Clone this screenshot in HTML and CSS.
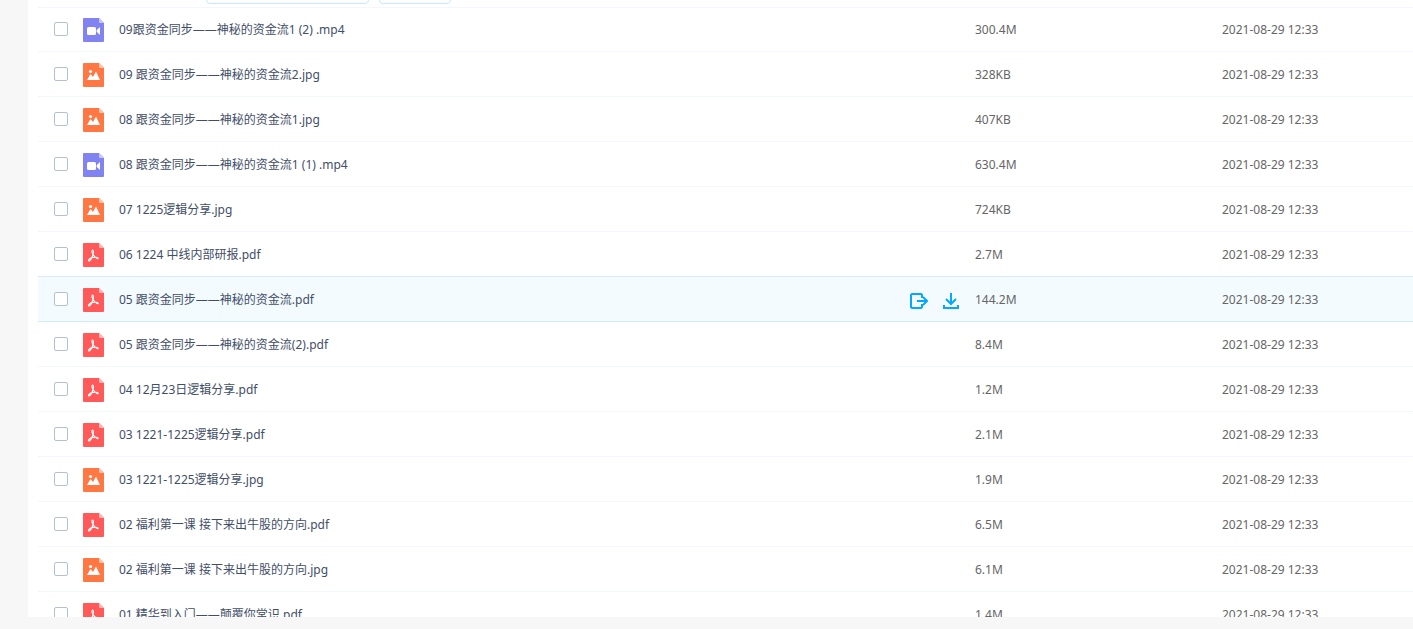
FILE: index.html
```
<!DOCTYPE html>
<html lang="zh-CN">

<head>
    <meta charset="UTF-8">
    <meta name="viewport" content="width=device-width, initial-scale=1.0">
    <title>文件列表</title>
    <link rel="stylesheet" href="styles.css">
</head>

<body>
    <!-- 图标 -->
    <svg class="sprite" aria-hidden="true">
        <symbol id="mp4" viewBox="0 0 21 24">
            <path fill="#8183f1" d="M1 0h15l5 5v18a1 1 0 0 1-1 1H1a1 1 0 0 1-1-1V1a1 1 0 0 1 1-1z" />
            <path fill="#c6c7fa" d="M16 0l5 5h-4a1 1 0 0 1-1-1z" />
            <rect fill="#fff" x="4" y="9" width="9" height="8" rx="1.5" />
            <path fill="#fff" d="M13.6 12.2L17 9v8l-3.400-3.200z" />
        </symbol>
        <symbol id="jpg" viewBox="0 0 21 24">
            <path fill="#ff7743" d="M1 0h15l5 5v18a1 1 0 0 1-1 1H1a1 1 0 0 1-1-1V1a1 1 0 0 1 1-1z" />
            <path fill="#ffc4ad" d="M16 0l5 5h-4a1 1 0 0 1-1-1z" />
            <circle fill="#fff" cx="7.500" cy="8.500" r="1.600" />
            <path fill="#fff" d="M4 17l3.500-6 2.500 3 3-5.500L17 17z" />
        </symbol>
        <symbol id="pdf" viewBox="0 0 21 24">
            <path fill="#ff5959" d="M1 0h15l5 5v18a1 1 0 0 1-1 1H1a1 1 0 0 1-1-1V1a1 1 0 0 1 1-1z" />
            <path fill="#ffb8b8" d="M16 0l5 5h-4a1 1 0 0 1-1-1z" />
            <path fill="none" stroke="#fff" stroke-width="1.100" stroke-linecap="round" stroke-linejoin="round"
                d="M9.500 7c1.200 0 1.200 2.400.5 4.500-.9 2.800-2.700 6.500-4.200 6.500-1.300-.4.700-2.700 3.200-3.400 2.600-.8 6.200-.5 6.300.7 0 1.200-3.300-.7-5.300-3.800C9.200 10 8.700 7.500 9.500 7z" />
        </symbol>
    </svg>

    <main class="main">
        <div class="toolbar">
            <button type="button" class="tool_btn wide" aria-label="保存"></button>
            <button type="button" class="tool_btn" aria-label="下载"></button>
        </div>
        <table class="list">
            <colgroup>
                <col>
                <col class="col_size">
                <col class="col_date">
            </colgroup>
            <tbody></tbody>
        </table>
    </main>

    <script>
        var files = [
            ["09跟资金同步——神秘的资金流1 (2) .mp4", "300.4M"],
            ["09 跟资金同步——神秘的资金流2.jpg", "328KB"],
            ["08 跟资金同步——神秘的资金流1.jpg", "407KB"],
            ["08 跟资金同步——神秘的资金流1 (1) .mp4", "630.4M"],
            ["07 1225逻辑分享.jpg", "724KB"],
            ["06 1224 中线内部研报.pdf", "2.7M"],
            ["05 跟资金同步——神秘的资金流.pdf", "144.2M"],
            ["05 跟资金同步——神秘的资金流(2).pdf", "8.4M"],
            ["04 12月23日逻辑分享.pdf", "1.2M"],
            ["03 1221-1225逻辑分享.pdf", "2.1M"],
            ["03 1221-1225逻辑分享.jpg", "1.9M"],
            ["02 福利第一课 接下来出牛股的方向.pdf", "6.5M"],
            ["02 福利第一课 接下来出牛股的方向.jpg", "6.1M"],
            ["01 精华到入门——颠覆你常识.pdf", "1.4M"]
        ];
        var active = 6;

        // 当前行的转存、下载按钮
        var actions = '<span class="actions">' +
            '<button type="button" aria-label="转存"><svg width="18" height="18" viewBox="0 0 18 18">' +
            '<path d="M12 6V3L11 2H2L1 3v12l1 1h9l1-1v-3M7 9h10M13 5l4 4-4 4"/></svg></button>' +
            '<button type="button" aria-label="下载"><svg width="18" height="18" viewBox="0 0 18 18">' +
            '<path d="M9 1v11M4 7l5 5 5-5M2 13v3h14v-3"/></svg></button></span>';

        var html = "";
        for (var i = 0; i < files.length; i++) {
            var name = files[i][0];
            var type = name.split(".").pop();
            html += '<tr' + (i == active ? ' class="active"' : '') + '>' +
                '<td><div class="name">' +
                '<input type="checkbox" id="f' + i + '">' +
                '<svg class="icon" width="21" height="24" aria-hidden="true"><use href="#' + type + '"/></svg>' +
                '<label for="f' + i + '">' + name + '</label>' +
                (i == active ? actions : '') +
                '</div></td>' +
                '<td>' + files[i][1] + '</td>' +
                '<td>2021-08-29 12:33</td></tr>';
        }
        document.querySelector(".list tbody").innerHTML = html;
    </script>
</body>

</html>
```
FILE: styles.css
```
* {
    box-sizing: border-box;
}

body {
    display: flex;
    height: 100vh;
    margin: 0;
    padding: 0 0 12px 28px;
    background-color: #f7f7f7;
    font-family: "Noto Sans", "Noto Sans CJK SC", sans-serif;
    font-size: 12px;
    line-height: 18px;
    color: #666;
}

.sprite {
    display: none;
}

.main {
    flex: 1;
    min-width: 0;
    padding-left: 10px;
    overflow: hidden;
    background-color: #fff;
}

.toolbar {
    display: flex;
    align-items: flex-end;
    gap: 10px;
    height: 7px;
    padding: 0 0 3px 168px;
    overflow: hidden;
}

.tool_btn {
    flex: none;
    width: 72px;
    height: 32px;
    border: 1px solid #c3eaff;
    border-radius: 4px;
    background-color: #fff;
}

.tool_btn.wide {
    width: 163px;
}

.list {
    width: 100%;
    table-layout: fixed;
    border-spacing: 0;
}

.col_size {
    width: 247px;
}

.col_date {
    width: 191px;
}

.list td {
    height: 45px;
    padding: 0;
    border-top: 1px solid transparent;
    border-bottom: 1px solid #f2f6fd;
}

.list tr:first-child td {
    border-top-color: #f2f6fd;
}

.list .active td {
    background-color: #f4fbff;
    border-bottom-color: #cbedff;
}

.list tr:has(+ .active) td {
    border-bottom-color: #d9ebfa;
}

.name {
    display: flex;
    align-items: center;
    padding: 0 15px 0 16px;
}

.name input {
    appearance: none;
    width: 14px;
    height: 14px;
    margin: 0 15px 2px 0;
    border: 1px solid #b4c1d3;
    border-radius: 2px;
    background-color: #fff;
}

.name input:checked {
    background-color: #06a7ff;
}

.icon {
    flex: none;
    margin-right: 15px;
}

.name label {
    color: #424e67;
}

.actions {
    display: flex;
    gap: 14px;
    margin-left: auto;
    padding-top: 2px;
}

.actions button {
    height: 18px;
    padding: 0;
    border: none;
    background: none;
}

.actions svg {
    display: block;
    fill: none;
    stroke: #06a7ff;
    stroke-width: 2;
}
```
